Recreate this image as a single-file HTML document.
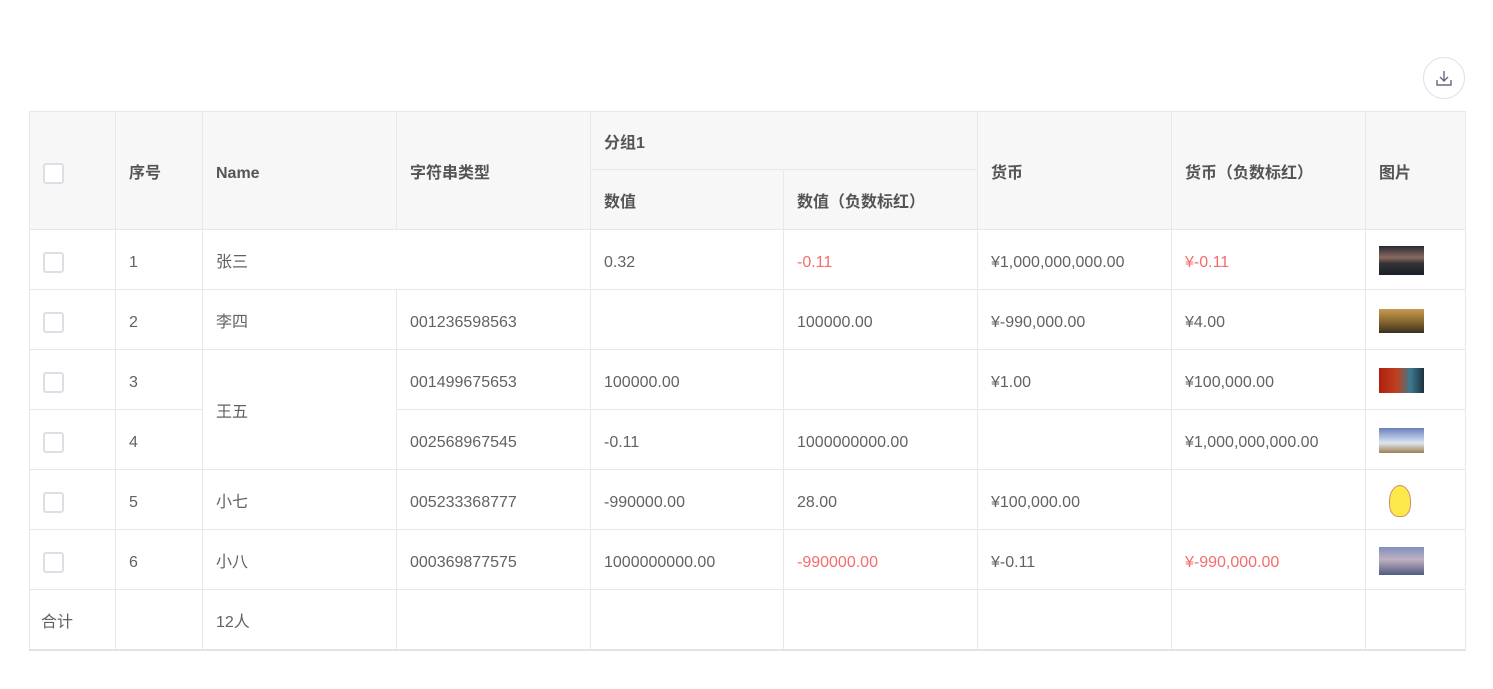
<!DOCTYPE html>
<html><head><meta charset="utf-8"><style>
body{margin:0;width:1493px;height:689px;background:#fff;font-family:"Liberation Sans","Noto Sans CJK SC",sans-serif;font-size:16px;color:#606266;position:relative;overflow:hidden}
table{position:absolute;left:29px;top:111px;border-collapse:collapse;table-layout:fixed;width:1437px}
td,th{border:1px solid #e8e8e8;padding:6px 0 0 13px;text-align:left;height:53px;white-space:nowrap;line-height:22px;vertical-align:middle}
td span,th span{vertical-align:middle}
th{background:#f7f7f7;font-weight:bold;color:#555}
.cb{display:inline-block;width:21px;height:21px;border:2px solid #dcdfe6;border-radius:3px;box-sizing:border-box;background:#fff;vertical-align:middle;position:relative;top:0}
.r{color:#f56c6c}
.img{display:inline-block;width:45px;height:29px;vertical-align:middle;position:relative;top:-2px}
.dl{position:absolute;left:1423px;top:57px;width:42px;height:42px;border:1px solid #e1e1e6;border-radius:50%;box-sizing:border-box}
tr:last-child td{border-bottom:2px solid #e4e4e4}
</style></head><body>
<div class="dl"><svg width="40" height="40" viewBox="0 0 40 40"><path d="M20 13v10M16 19l4 4 4-4M13 22v5h14v-5" fill="none" stroke="#666a80" stroke-width="1.4"/></svg></div>
<table>
<colgroup><col style="width:86px"><col style="width:87px"><col style="width:194px"><col style="width:194px"><col style="width:193px"><col style="width:194px"><col style="width:194px"><col style="width:194px"><col style="width:100px"></colgroup>
<tr><th rowspan="2"><span class="cb"></span></th><th rowspan="2">序号</th><th rowspan="2">Name</th><th rowspan="2">字符串类型</th><th colspan="2" style="height:51px">分组1</th><th rowspan="2">货币</th><th rowspan="2">货币（负数标红）</th><th rowspan="2">图片</th></tr>
<tr><th>数值</th><th>数值（负数标红）</th></tr>
<tr><td><span class="cb"></span></td><td>1</td><td colspan="2">张三</td><td>0.32</td><td class="r">-0.11</td><td>¥1,000,000,000.00</td><td class="r">¥-0.11</td><td><span class="img" style="background:linear-gradient(#2a2a33,#8a6a60 40%,#333 60%,#1a1f2a)"></span></td></tr>
<tr><td><span class="cb"></span></td><td>2</td><td>李四</td><td>001236598563</td><td></td><td>100000.00</td><td>¥-990,000.00</td><td>¥4.00</td><td><span class="img" style="height:24px;background:linear-gradient(#c89a50,#8a6a30 50%,#3a3020)"></span></td></tr>
<tr><td><span class="cb"></span></td><td>3</td><td rowspan="2">王五</td><td>001499675653</td><td>100000.00</td><td></td><td>¥1.00</td><td>¥100,000.00</td><td><span class="img" style="height:25px;background:linear-gradient(90deg,#b02010,#c04020 40%,#3a7a90 70%,#203040)"></span></td></tr>
<tr><td><span class="cb"></span></td><td>4</td><td>002568967545</td><td>-0.11</td><td>1000000000.00</td><td></td><td>¥1,000,000,000.00</td><td><span class="img" style="height:25px;background:linear-gradient(#6a80c0,#dde6f0 60%,#a08050)"></span></td></tr>
<tr><td><span class="cb"></span></td><td>5</td><td>小七</td><td>005233368777</td><td>-990000.00</td><td>28.00</td><td>¥100,000.00</td><td></td><td><span style="display:inline-block;width:45px;height:38px;vertical-align:middle;position:relative;top:-3px"><span style="position:absolute;left:10px;top:4px;width:20px;height:30px;background:#fbe94a;border:1px solid #d09070;border-radius:50% 50% 40% 40%"></span></span></td></tr>
<tr><td><span class="cb"></span></td><td>6</td><td>小八</td><td>000369877575</td><td>1000000000.00</td><td class="r">-990000.00</td><td>¥-0.11</td><td class="r">¥-990,000.00</td><td><span class="img" style="height:28px;background:linear-gradient(#8090c0,#c0b0c0 45%,#505a80)"></span></td></tr>
<tr><td style="padding-left:11px">合计</td><td></td><td>12人</td><td></td><td></td><td></td><td></td><td></td><td></td></tr>
</table>
</body></html>
